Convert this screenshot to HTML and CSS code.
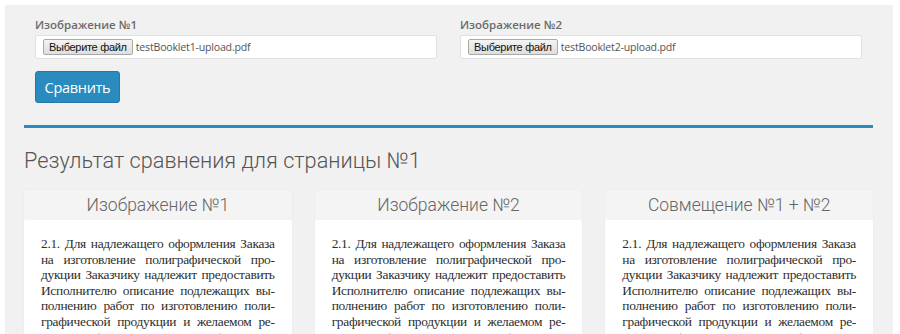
FILE: index.html
```html
<!DOCTYPE html>
<html lang="ru">
<head>
  <meta charset="UTF-8" />
  <meta name="viewport" content="width=device-width, initial-scale=1.0" />
  <title>Сравнение буклетов</title>
  <link rel="stylesheet" href="styles.css">
</head>
<body>
  <div class="panel">
    <form class="upload-form" onsubmit="return false;">
      <div class="upload-row">
        <div class="field">
          <label class="field-label">Изображение №1</label>
          <div class="file-box">
            <span class="file-btn">Выберите файл</span>
            <span class="file-name">testBooklet1-upload.pdf</span>
          </div>
        </div>
        <div class="field">
          <label class="field-label">Изображение №2</label>
          <div class="file-box">
            <span class="file-btn">Выберите файл</span>
            <span class="file-name">testBooklet2-upload.pdf</span>
          </div>
        </div>
      </div>
      <button class="compare-btn" type="submit">Сравнить</button>
    </form>

    <div class="results">
      <h2 class="results-title">Результат сравнения для страницы №1</h2>

      <div class="cards">
        <div class="card">
          <div class="card-title">Изображение №1</div>
          <div class="card-body">
            <p class="page-line">2.1. Для надлежащего оформления Заказа</p>
            <p class="page-line">на изготовление полиграфической про-</p>
            <p class="page-line">дукции Заказчику надлежит предоставить</p>
            <p class="page-line">Исполнителю описание подлежащих вы-</p>
            <p class="page-line">полнению работ по изготовлению поли-</p>
            <p class="page-line">графической продукции и желаемом ре-</p>
            <p class="page-line">зультате (техническое задание). Описа-</p>
          </div>
        </div>
        <div class="card">
          <div class="card-title">Изображение №2</div>
          <div class="card-body">
            <p class="page-line">2.1. Для надлежащего оформления Заказа</p>
            <p class="page-line">на изготовление полиграфической про-</p>
            <p class="page-line">дукции Заказчику надлежит предоставить</p>
            <p class="page-line">Исполнителю описание подлежащих вы-</p>
            <p class="page-line">полнению работ по изготовлению поли-</p>
            <p class="page-line">графической продукции и желаемом ре-</p>
            <p class="page-line">зультате (техническое задание). Описа-</p>
          </div>
        </div>
        <div class="card">
          <div class="card-title">Совмещение №1 + №2</div>
          <div class="card-body">
            <p class="page-line">2.1. Для надлежащего оформления Заказа</p>
            <p class="page-line">на изготовление полиграфической про-</p>
            <p class="page-line">дукции Заказчику надлежит предоставить</p>
            <p class="page-line">Исполнителю описание подлежащих вы-</p>
            <p class="page-line">полнению работ по изготовлению поли-</p>
            <p class="page-line">графической продукции и желаемом ре-</p>
            <p class="page-line">зультате (техническое задание). Описа-</p>
          </div>
        </div>
      </div>
    </div>
  </div>
</body>
</html>
```

FILE: styles.css
```css
body {
  margin: 0;
  background: #ffffff;
  font-family: 'Open Sans', 'Liberation Sans', sans-serif;
  color: #555;
  overflow: hidden;
}

.panel {
  margin: 5px 7px 0 5px;
  background: #f1f1f1;
  padding: 12px 20px 0 19px;
  height: 340px;
  box-sizing: border-box;
}

/* upload form */
.upload-form {
  padding: 0 11px 22px 11px;
  border-bottom: 3px solid #2a8bbf;
}

.upload-row {
  display: grid;
  grid-template-columns: 1fr 1fr;
  gap: 23px;
}

.field-label {
  display: block;
  font-size: 11.5px;
  font-weight: 600;
  color: #6a6a6a;
  line-height: 16px;
  margin-bottom: 2px;
}

.file-box {
  display: flex;
  align-items: center;
  height: 24px;
  box-sizing: border-box;
  background: #fff;
  border: 1px solid #e0e0e0;
  border-radius: 2px;
  padding: 0 7px;
}

.file-btn {
  font-family: 'Liberation Sans', Arial, sans-serif;
  font-size: 11px;
  letter-spacing: -0.3px;
  color: #111;
  line-height: 14px;
  padding: 0 5px;
  border: 1px solid #a9a9a9;
  border-radius: 2px;
  background: linear-gradient(#f4f4f4, #dedede);
}

.file-name {
  font-size: 10.6px;
  letter-spacing: -0.2px;
  color: #555;
  margin-left: 3px;
}

.compare-btn {
  display: block;
  margin-top: 12px;
  width: 85px;
  height: 32px;
  padding: 0;
  background: #2a8bbf;
  color: #fff;
  border: 1px solid #2479a8;
  border-radius: 3px;
  font-family: 'Open Sans', sans-serif;
  font-size: 14.5px;
  letter-spacing: -0.3px;
  cursor: pointer;
}

/* comparison results */
.results-title {
  margin: 20px 0 16px;
  font-family: Roboto, 'Noto Sans', sans-serif;
  font-weight: 300;
  font-size: 21.7px;
  line-height: 26px;
  color: #555;
}

.cards {
  display: grid;
  grid-template-columns: repeat(3, minmax(0, 1fr));
  gap: 23px;
}

.card {
  background: #f4f4f4;
  box-shadow: 0 0 2px rgba(0,0,0,0.06);
  border-radius: 3px;
}

.card-title {
  text-align: center;
  font-family: Roboto, 'Noto Sans', sans-serif;
  font-weight: 300;
  font-size: 17.5px;
  line-height: 30px;
  color: #666;
}

.card-body {
  background: #fff;
  border-radius: 3px 3px 0 0;
  padding: 16px 17px 0 17px;
  overflow: hidden;
}

.page-line {
  margin: 0;
  font-family: 'Liberation Serif', 'Times New Roman', serif;
  font-size: 13.4px;
  letter-spacing: -0.3px;
  line-height: 15.6px;
  color: #2e2e2e;
  text-align: justify;
  text-align-last: justify;
  white-space: nowrap;
}
```
